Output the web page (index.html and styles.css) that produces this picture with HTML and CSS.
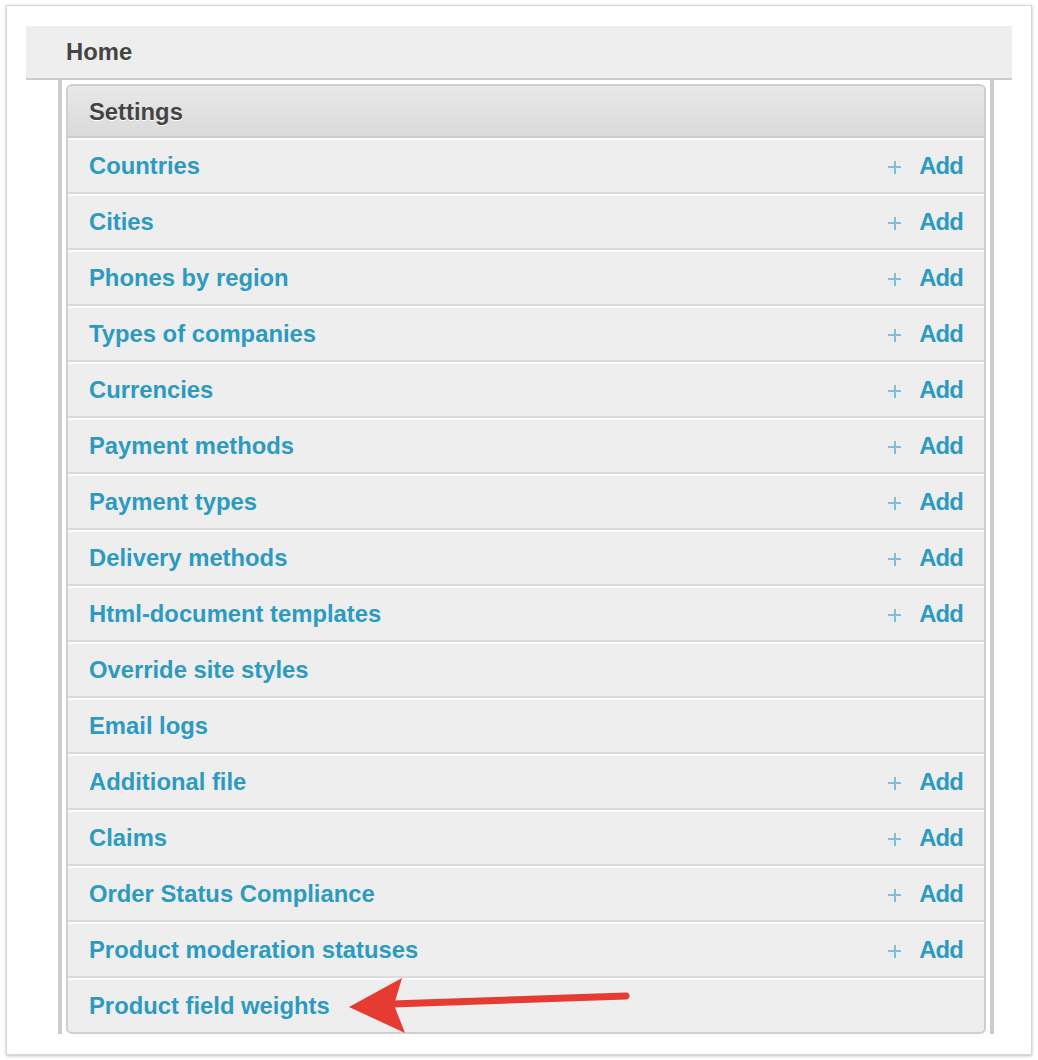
FILE: index.html
```html
<!DOCTYPE html>
<html>
<head>
<meta charset="utf-8">
<link rel="stylesheet" href="styles.css">
</head>
<body>
<div class="frame">
  <div class="home">Home</div>
  <div class="wrap">
    <div class="panel">
      <div class="panel-head">Settings</div>
      <div class="row"><a class="name">Countries</a><a class="add"><span class="plus"></span>Add</a></div>
      <div class="row"><a class="name">Cities</a><a class="add"><span class="plus"></span>Add</a></div>
      <div class="row"><a class="name">Phones by region</a><a class="add"><span class="plus"></span>Add</a></div>
      <div class="row"><a class="name">Types of companies</a><a class="add"><span class="plus"></span>Add</a></div>
      <div class="row"><a class="name">Currencies</a><a class="add"><span class="plus"></span>Add</a></div>
      <div class="row"><a class="name">Payment methods</a><a class="add"><span class="plus"></span>Add</a></div>
      <div class="row"><a class="name">Payment types</a><a class="add"><span class="plus"></span>Add</a></div>
      <div class="row"><a class="name">Delivery methods</a><a class="add"><span class="plus"></span>Add</a></div>
      <div class="row"><a class="name">Html-document templates</a><a class="add"><span class="plus"></span>Add</a></div>
      <div class="row"><a class="name">Override site styles</a></div>
      <div class="row"><a class="name">Email logs</a></div>
      <div class="row"><a class="name">Additional file</a><a class="add"><span class="plus"></span>Add</a></div>
      <div class="row"><a class="name">Claims</a><a class="add"><span class="plus"></span>Add</a></div>
      <div class="row"><a class="name">Order Status Compliance</a><a class="add"><span class="plus"></span>Add</a></div>
      <div class="row"><a class="name">Product moderation statuses</a><a class="add"><span class="plus"></span>Add</a></div>
      <div class="row last"><a class="name">Product field weights</a></div>
    </div>
  </div>
</div>
<svg class="arrow" width="1038" height="1060" viewBox="0 0 1038 1060" xmlns="http://www.w3.org/2000/svg">
  <line x1="626" y1="996" x2="392" y2="1004" stroke="#e53b30" stroke-width="7" stroke-linecap="round"/>
  <polygon points="349,1007 402,978 394,1005 405,1033" fill="#e53b30"/>
</svg>
</body>
</html>
```

FILE: styles.css
```css
html, body {
  margin: 0;
  padding: 0;
  background: #fff;
}
body {
  font-family: "Liberation Sans", Arial, sans-serif;
  position: relative;
  width: 1038px;
  height: 1060px;
  overflow: hidden;
}
.frame {
  margin: 5px 0 0 6px;
  width: 1026px;
  height: 1050px;
  box-sizing: border-box;
  background: #fff;
  border: 1px solid #d6d6d6;
  box-shadow: 0 1px 3px rgba(0, 0, 0, 0.25);
  padding: 20px 19px 0 19px;
}
.home {
  height: 52px;
  background: #eeeeee;
  border-bottom: 2px solid #cccccc;
  padding-left: 40px;
  display: flex;
  align-items: center;
  font-size: 23.8px;
  font-weight: bold;
  color: #444;
}
.wrap {
  margin: 0 18px 0 32px;
  border-left: 4px solid #cccccc;
  border-right: 4px solid #cccccc;
  padding: 4px 4px 0 4px;
}
.panel {
  border: 2px solid #cfcfcf;
  border-radius: 6px;
  overflow: hidden;
  background: #eeeeee;
}
.panel-head {
  height: 52px;
  background: linear-gradient(#e8e8e8, #dadada);
  border-bottom: 2px solid #cccccc;
  padding: 2px 21px 0 21px;
  box-sizing: border-box;
  display: flex;
  align-items: center;
  font-size: 23.8px;
  font-weight: bold;
  color: #444;
  text-shadow: 0 1px 0 #fff;
}
.row {
  height: 52px;
  border-top: 2px solid #fafafa;
  border-bottom: 2px solid #dcdcdc;
  padding: 0 21px;
  display: flex;
  align-items: center;
  justify-content: space-between;
  font-size: 23.8px;
  font-weight: bold;
  color: #2c9ac1;
}
.row.last {
  border-bottom: none;
}
.name, .add {
  color: #2c9ac1;
  text-decoration: none;
}
.add {
  display: flex;
  align-items: center;
  letter-spacing: -0.8px;
}
.plus {
  position: relative;
  width: 13px;
  height: 13px;
  margin-right: 18px;
  margin-top: 2px;
}
.plus::before, .plus::after {
  content: "";
  position: absolute;
  background: #7dbfd6;
}
.plus::before {
  left: 0;
  right: 0;
  top: 5.5px;
  height: 2px;
}
.plus::after {
  top: 0;
  bottom: 0;
  left: 5.5px;
  width: 2px;
}
.arrow {
  position: absolute;
  left: 0;
  top: 0;
  pointer-events: none;
}
```
